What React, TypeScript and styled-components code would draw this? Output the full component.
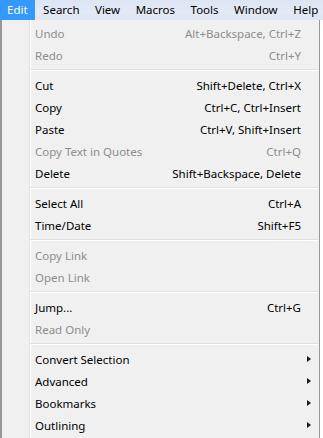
import React from 'react'
import styled, { createGlobalStyle } from 'styled-components'

const GlobalStyle = createGlobalStyle`
  html, body {
    margin: 0;
    padding: 0;
    background: #ffffff;
  }
  body {
    font-family: "Noto Sans", "Open Sans", sans-serif;
    font-size: 11.5px;
  }
`

type Entry =
  | { kind: 'sep' }
  | { kind: 'item'; label: string; shortcut?: string; disabled?: boolean; submenu?: boolean }

const menus = ['Edit', 'Search', 'View', 'Macros', 'Tools', 'Window', 'Help']

const entries: Entry[] = [
  { kind: 'item', label: 'Undo', shortcut: 'Alt+Backspace, Ctrl+Z', disabled: true },
  { kind: 'item', label: 'Redo', shortcut: 'Ctrl+Y', disabled: true },
  { kind: 'sep' },
  { kind: 'item', label: 'Cut', shortcut: 'Shift+Delete, Ctrl+X' },
  { kind: 'item', label: 'Copy', shortcut: 'Ctrl+C, Ctrl+Insert' },
  { kind: 'item', label: 'Paste', shortcut: 'Ctrl+V, Shift+Insert' },
  { kind: 'item', label: 'Copy Text in Quotes', shortcut: 'Ctrl+Q', disabled: true },
  { kind: 'item', label: 'Delete', shortcut: 'Shift+Backspace, Delete' },
  { kind: 'sep' },
  { kind: 'item', label: 'Select All', shortcut: 'Ctrl+A' },
  { kind: 'item', label: 'Time/Date', shortcut: 'Shift+F5' },
  { kind: 'sep' },
  { kind: 'item', label: 'Copy Link', disabled: true },
  { kind: 'item', label: 'Open Link', disabled: true },
  { kind: 'sep' },
  { kind: 'item', label: 'Jump...', shortcut: 'Ctrl+G' },
  { kind: 'item', label: 'Read Only', disabled: true },
  { kind: 'sep' },
  { kind: 'item', label: 'Convert Selection', submenu: true },
  { kind: 'item', label: 'Advanced', submenu: true },
  { kind: 'item', label: 'Bookmarks', submenu: true },
  { kind: 'item', label: 'Outlining', submenu: true },
]

const App: React.FC = () => {
  return (
    <>
      <GlobalStyle />
      <Window>
        <MenuBar>
          {menus.map((m, i) => (
            <MenuTitle key={m} $active={i === 0}>{m}</MenuTitle>
          ))}
        </MenuBar>
        <Dropdown>
          {entries.map((e, i) =>
            e.kind === 'sep' ? (
              <Separator key={i} />
            ) : (
              <Item key={i} $disabled={e.disabled}>
                <Label>{e.label}</Label>
                <Shortcut>{e.shortcut}</Shortcut>
                <ArrowCell>{e.submenu && <Arrow />}</ArrowCell>
              </Item>
            )
          )}
        </Dropdown>
      </Window>
    </>
  )
}

const Window = styled.div`
  width: 323px;
  height: 438px;
  overflow: hidden;
  background: #ffffff;
`

const MenuBar = styled.div`
  display: flex;
  align-items: stretch;
  height: 20px;
  background: linear-gradient(to bottom, #dde5f3 0%, #e3e9f5 60%, #dfe6f2 100%);
`

const MenuTitle = styled.div<{ $active?: boolean }>`
  display: flex;
  align-items: center;
  padding: 0 7px 1px 7px;
  margin-right: 1.5px;
  color: ${p => (p.$active ? '#ffffff' : '#000000')};
  background: ${p => (p.$active ? '#3399ff' : 'transparent')};
  line-height: 1;
`

const Dropdown = styled.div`
  width: 317px;
  height: 440px;
  border-left: 2px solid #979797;
  border-right: 1px solid #979797;
  padding-top: 2px;
  background: linear-gradient(
    to right,
    #f0f0f0 0 27px,
    #e2e3e3 27px 28px,
    #ffffff 28px 29px,
    #f0f0f0 29px
  );
`

const Item = styled.div<{ $disabled?: boolean }>`
  display: grid;
  grid-template-columns: 1fr auto 18px;
  align-items: center;
  height: 22px;
  padding-left: 33px;
  color: ${p => (p.$disabled ? '#8d8d8d' : '#000000')};
`

const Label = styled.span`
  white-space: nowrap;
`

const Shortcut = styled.span`
  white-space: nowrap;
  text-align: right;
`

const ArrowCell = styled.span`
  display: flex;
  justify-content: flex-end;
  padding-right: 8px;
`

const Arrow = styled.span`
  width: 0;
  height: 0;
  border-top: 3.5px solid transparent;
  border-bottom: 3.5px solid transparent;
  border-left: 4px solid #1a1a1a;
`

const Separator = styled.div`
  height: 8px;
  margin-left: 28px;
  margin-right: 1px;
  display: flex;
  flex-direction: column;
  justify-content: center;
  &::before {
    content: '';
    display: block;
    height: 1px;
    background: #e0e0e0;
  }
  &::after {
    content: '';
    display: block;
    height: 1px;
    background: #ffffff;
  }
`

export default App
